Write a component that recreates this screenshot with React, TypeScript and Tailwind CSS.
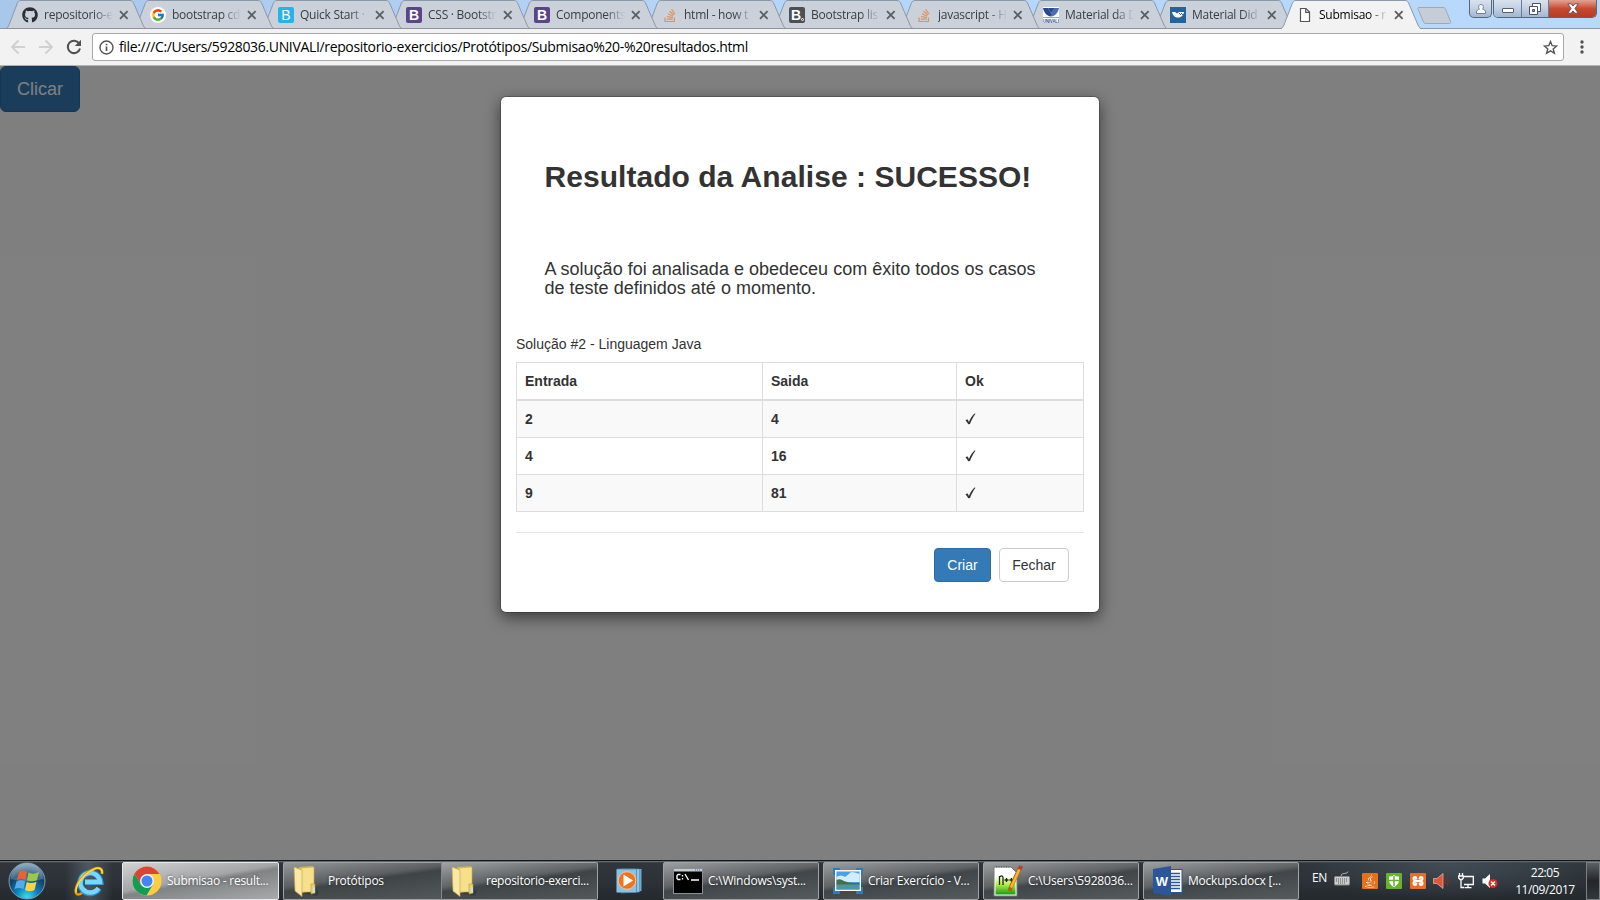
import React from 'react';
import { FaGithub, FaStackOverflow, FaJava } from 'react-icons/fa';
import { FcGoogle } from 'react-icons/fc';
import { SiXampp } from 'react-icons/si';

const uiFont = "font-['Open_Sans','Noto_Sans',sans-serif]";

function BadgeB({ tone }: { tone: 'cyan' | 'purple' | 'grey' }) {
  const bg = tone === 'cyan' ? 'bg-[#25b4e8]' : tone === 'purple' ? 'bg-[#5b4589]' : 'bg-[#4a5055]';
  const weight = tone === 'cyan' ? 'font-normal' : 'font-bold';
  return (
    <span className={`flex h-4 w-4 items-center justify-center rounded-[2px] font-['Liberation_Sans',sans-serif] text-[14px] leading-none text-white ${bg} ${weight}`}>
      B{tone === 'grey' && <span className="mt-2 -mr-px h-[3px] w-[3px] rounded-full border border-white" />}
    </span>
  );
}

function UnivaliIcon() {
  return (
    <svg width="16" height="16" viewBox="0 0 16 16">
      <rect width="16" height="16" fill="#fff" />
      <path d="M0 1H5L8 6V9.500C4 9 1 6 0 1Z" fill="#27498f" />
      <path d="M5 1H11V3L8 6Z" fill="#27498f" />
      <path d="M11 1H16C15 6 12 9 8 9.500V6Z" fill="#4c6db0" />
      <path d="M0 10H16V11H0Z" fill="#27498f" opacity=".5" />
      <text x="0" y="15.500" fontSize="4.600" fontWeight="bold" textLength="16" lengthAdjust="spacingAndGlyphs" fill="#27498f" fontFamily="Liberation Sans, sans-serif">UNIVALI</text>
    </svg>
  );
}

function MaterialIcon() {
  return (
    <svg width="16" height="16" viewBox="0 0 16 16">
      <rect width="16" height="16" fill="#24649c" />
      <path d="M2 5H5L7 6.500L9 5H14C13 9 11 10.500 8 10.500C5 10.500 3 9 2 5Z" fill="#fff" />
      <path d="M9 6h1v1h-1zM11 6h1v1h-1zM10 7h1v1h-1zM12 7h1v1h-1z" fill="#24649c" />
    </svg>
  );
}

function PageIcon() {
  return (
    <svg width="16" height="16" viewBox="0 0 16 16" fill="none" stroke="#555" strokeWidth="1.200">
      <path d="M3.500 1.500H9L12.500 5V14.500H3.500Z" fill="#fff" />
      <path d="M8.700 1.500V5.300H12.500" />
    </svg>
  );
}

type Tab = { title: string; icon: React.ReactNode; width: string; active?: boolean };

const so = <FaStackOverflow className="h-[15px] w-4 text-[#e0915a]" />;

const tabs: Tab[] = [
  { title: 'repositorio-e', icon: <FaGithub className="h-4 w-4 text-[#2b2d30]" />, width: 'w-[128px]' },
  { title: 'bootstrap cd', icon: <span className="flex h-4 w-4 items-center justify-center rounded-full bg-white"><FcGoogle className="h-[14px] w-[14px]" /></span>, width: 'w-[128px]' },
  { title: 'Quick Start ·', icon: <BadgeB tone="cyan" />, width: 'w-[128px]' },
  { title: 'CSS · Bootstr', icon: <BadgeB tone="purple" />, width: 'w-[128px]' },
  { title: 'Components', icon: <BadgeB tone="purple" />, width: 'w-[128px]' },
  { title: 'html - how t', icon: so, width: 'w-[127px]' },
  { title: 'Bootstrap lis', icon: <BadgeB tone="grey" />, width: 'w-[127px]' },
  { title: 'javascript - H', icon: so, width: 'w-[127px]' },
  { title: 'Material da D', icon: <UnivaliIcon />, width: 'w-[127px]' },
  { title: 'Material Did', icon: <MaterialIcon />, width: 'w-[127px]' },
  { title: 'Submisao - r', icon: <PageIcon />, width: 'w-[136px]', active: true },
];

function TabItem({ tab, index }: { tab: Tab; index: number }) {
  return (
    <div className={`relative flex h-[29px] shrink-0 items-center ${tab.width}`} style={{ zIndex: tab.active ? 30 : 20 - index }}>
      <svg className="absolute top-0 left-0 overflow-visible" width="140" height="29" viewBox="0 0 140 29">
        <path d="M0 29C1.500 28 2 27 3 25L11 4C12 1.500 13 .5 15 .5H124C126 .5 127 1.500 128 4L137 25C138 27 138.500 28 140 29Z" fill={tab.active ? '#f2f2f2' : '#cbd1da'} />
        <path d="M0 28.500C1.500 28 2 27 3 25L11 4C12 1.500 13 .5 15 .5H124C126 .5 127 1.500 128 4L137 25C138 27 138.500 28 140 28.500" fill="none" stroke="#8b98a8" />
        {!tab.active && <path d="M0 28.500H140" stroke="#8f9298" />}
      </svg>
      <div className="relative flex w-[126px] items-center pt-px pl-[16px]">
        <span className="flex h-4 w-4 shrink-0 items-center justify-center">{tab.icon}</span>
        <span className={`ml-[6px] w-[69px] shrink-0 text-[12px] leading-[18px] tracking-[-0.25px] whitespace-nowrap [mask-image:linear-gradient(to_right,#000_72%,transparent_100%)] ${uiFont} ${tab.active ? 'text-black' : 'text-[#3a3d42]'}`}>{tab.title}</span>
        <svg className="ml-[6px] shrink-0" width="10" height="10" viewBox="0 0 10 10" stroke="#5a5d61" strokeWidth="1.800">
          <path d="M1 1.200L8.600 8.800M8.600 1.200L1 8.800" />
        </svg>
      </div>
    </div>
  );
}

function WindowControls() {
  const glass = 'bg-linear-to-b from-[#d9e2ee] from-0% via-[#c4d2e4] via-45% to-[#a3b6d0]';
  return (
    <div className="ml-auto flex h-[18px] pr-[3px]">
      <div className={`mr-px flex w-[23px] items-center justify-center rounded-b-[5px] border border-t-0 border-[#58667a] ${glass}`}>
        <svg width="12" height="12" viewBox="0 0 12 12" fill="#fff" stroke="#6a7587" strokeWidth=".9">
          <path d="M1.500 10.500V9C1.500 7.500 3 6.500 4.500 6.200C3 4.500 3.500 1.500 6 1.500S9 4.500 7.500 6.200C9 6.500 10.500 7.500 10.500 9V10.500Z" />
        </svg>
      </div>
      <div className="flex overflow-hidden rounded-b-[5px] border border-t-0 border-[#58667a]">
        <div className={`flex w-7 items-center justify-center border-r border-[#6b7a90] pt-1 ${glass}`}>
          <span className="h-[5px] w-3 rounded-[1px] border border-[#555e70] bg-white" />
        </div>
        <div className={`flex w-[27px] items-center justify-center border-r border-[#6b7a90] ${glass}`}>
          <svg width="12" height="12" viewBox="0 0 12 12" fill="#fff" stroke="#4b5364">
            <path d="M3.500 .5H11.500V8.500H3.500Z" />
            <path d="M.5 3.500H8.500V11.500H.5Z" />
            <path d="M3.500 6.500H5.500V8.500H3.500Z" fill="#8d9fb8" />
          </svg>
        </div>
        <div className="flex w-[47px] items-center justify-center bg-linear-to-b from-[#e3a394] via-[#c74a33] via-50% to-[#b53c22]">
          <svg width="12" height="11" viewBox="0 0 12 11">
            <path d="M.8 .8H4.200L6 3L7.800 .8H11.200L8 5.500L11.200 10.200H7.800L6 8L4.200 10.200H.8L4 5.500Z" fill="#fff" stroke="#5d4a52" strokeWidth=".9" />
          </svg>
        </div>
      </div>
    </div>
  );
}

function TabStrip() {
  return (
    <div className="flex h-[29px] shrink-0 items-start bg-linear-to-r from-[#a9c7ea] via-[#b5d6fa] to-[#b9d9fb] pl-[6px] shadow-[inset_0_-1px_0_#8b98a8]">
      {tabs.map((t, i) => (
        <TabItem key={t.title} tab={t} index={i} />
      ))}
      <svg className="mt-[7px] shrink-0" width="35" height="18" viewBox="0 0 35 18">
        <path d="M2 .5H26C27.500 .5 28 1 28.500 2L33.500 14.500C34 16 33.500 16.500 32.500 16.500H9C7.500 16.500 7 16 6.500 15L1 2C.7 1 1 .5 2 .5Z" fill="#c6cdd6" stroke="#9aaabd" />
      </svg>
      <WindowControls />
    </div>
  );
}

function Toolbar() {
  return (
    <div className="relative z-40 flex h-[37px] shrink-0 items-center border-b border-[#b4b4b4] bg-[#f2f2f2]">
      <svg className="ml-[10px]" width="16" height="16" viewBox="0 0 16 16" fill="none" stroke="#d0d0d0" strokeWidth="1.900">
        <path d="M15 8H2.500M8.500 1.500L2 8L8.500 14.500" />
      </svg>
      <svg className="ml-3" width="16" height="16" viewBox="0 0 16 16" fill="none" stroke="#d0d0d0" strokeWidth="1.900">
        <path d="M1 8H13.500M7.500 1.500L14 8L7.500 14.500" />
      </svg>
      <svg className="ml-3" width="16" height="16" viewBox="0 0 16 16" fill="none" stroke="#505050" strokeWidth="2">
        <path d="M13.200 4.500A6.200 6.200 0 1 0 14 9.500" />
        <path d="M15 .8V7H8.800Z" fill="#505050" stroke="none" />
      </svg>
      <div className="ml-[10px] flex h-7 w-[1472px] items-center rounded-[3px] border border-[#a9a9a9] bg-white">
        <svg className="ml-[6px]" width="15" height="15" viewBox="0 0 15 15" fill="none" stroke="#555" strokeWidth="1.400">
          <circle cx="7.500" cy="7.500" r="6.500" />
          <path d="M7.500 6.500V11M7.500 3.700V5.300" strokeWidth="1.700" />
        </svg>
        <span className={`ml-[5px] text-[14px] leading-5 tracking-[-0.342px] whitespace-nowrap text-black ${uiFont}`}>file:///C:/Users/5928036.UNIVALI/repositorio-exercicios/Protótipos/Submisao%20-%20resultados.html</span>
        <svg className="mr-[5px] ml-auto" width="15" height="15" viewBox="0 0 15 15" fill="none" stroke="#555" strokeWidth="1.400">
          <path d="M7.500 1.500L9.200 5.700L13.700 6L10.200 8.900L11.400 13.300L7.500 10.900L3.600 13.300L4.800 8.900L1.300 6L5.800 5.700Z" />
        </svg>
      </div>
      <svg className="ml-[16px]" width="4" height="14" viewBox="0 0 4 14" fill="#505050">
        <circle cx="2" cy="2" r="1.700" />
        <circle cx="2" cy="7" r="1.700" />
        <circle cx="2" cy="12" r="1.700" />
      </svg>
    </div>
  );
}

const rows = [
  ['2', '4'],
  ['4', '16'],
  ['9', '81'],
];

function ResultModal() {
  return (
    <div className="mt-[30px] flex h-[517px] w-[600px] flex-col rounded-[6px] border border-black/20 bg-white bg-clip-padding px-[15px] text-[14px] leading-5 text-[#333] shadow-[0_5px_15px_rgba(0,0,0,0.5)]">
      <h2 className="mt-[63px] ml-[28.5px] text-[30px] leading-[33px] font-bold tracking-[0.04px] whitespace-nowrap">Resultado da Analise : SUCESSO!</h2>
      <h4 className="mt-[67px] ml-[28.5px] text-[18px] leading-[19px] tracking-[0.012px] whitespace-nowrap">
        A solução foi analisada e obedeceu com êxito todos os casos
        <br />
        de teste definidos até o momento.
      </h4>
      <p className="mt-9 mb-[8px]">Solução #2 - Linguagem Java</p>
      <table className="w-[568px] table-fixed border-collapse border border-[#ddd] text-left">
        <colgroup>
          <col className="w-[246px]" />
          <col className="w-[194px]" />
          <col className="w-[127px]" />
        </colgroup>
        <thead>
          <tr className="h-[37px]">
            {['Entrada', 'Saida', 'Ok'].map((h) => (
              <th key={h} className="border border-b-2 border-[#ddd] px-2 pt-px font-bold">{h}</th>
            ))}
          </tr>
        </thead>
        <tbody>
          {rows.map(([a, b]) => (
            <tr key={a} className="h-[37px] first:h-[38px] odd:bg-[#f9f9f9]">
              <td className="border border-[#ddd] px-2 font-bold">{a}</td>
              <td className="border border-[#ddd] px-2 font-bold">{b}</td>
              <td className="border border-[#ddd] px-2">
                <svg width="11" height="12" viewBox="0 0 11 12" fill="#333">
                  <path d="M0.500 7.500L2.300 6.300C3.100 7 3.500 8 3.900 9C5.300 5.500 7.200 2.500 9.500 0.500L10.500 .8C8.300 3.700 6.300 7.500 5 11L3.200 11.300C2.600 9.700 1.700 8.500 0.500 7.500Z" />
                </svg>
              </td>
            </tr>
          ))}
        </tbody>
      </table>
      <div className="mt-5 flex justify-end gap-2 border-t border-[#e5e5e5] px-[15px] pt-[15px]">
        <button className="h-[34px] w-[57px] rounded-[4px] border border-[#2e6da4] bg-[#337ab7] text-white">Criar</button>
        <button className="h-[34px] w-[70px] rounded-[4px] border border-[#ccc] bg-white">Fechar</button>
      </div>
    </div>
  );
}

function StartOrb() {
  return (
    <svg width="38" height="38" viewBox="0 0 38 38">
      <defs>
        <radialGradient id="orb" cx=".5" cy=".95" r=".9">
          <stop offset="0" stopColor="#2fe0ff" />
          <stop offset=".35" stopColor="#127fb8" />
          <stop offset=".7" stopColor="#123f63" />
          <stop offset="1" stopColor="#6d93ad" />
        </radialGradient>
      </defs>
      <circle cx="19" cy="19" r="18" fill="url(#orb)" stroke="#7d99a9" />
      <path d="M3 17A16 16 0 0 1 35 17Q19 22 3 17Z" fill="#fff" opacity=".2" />
      <path d="M11 10Q15 7 19 10L17.500 18Q13.500 15.500 9 18Z" fill="#ee6033" />
      <path d="M20.500 10.500Q25 13 31 10L29 18Q24 20.500 19 18.200Z" fill="#9bc94a" />
      <path d="M8.500 19.500Q13 17 17.200 19.500L15.500 27Q11 25 6.500 27Z" fill="#53aee8" />
      <path d="M18.700 20Q23 22 28.500 19.700L26.500 28Q21.500 30.500 17 28Z" fill="#fbd04b" />
    </svg>
  );
}

function IeIcon() {
  return (
    <svg width="32" height="32" viewBox="0 0 32 32" fill="none">
      <path d="M26 23.500A10.200 10.200 0 1 1 27.500 17H12" stroke="#2a8fd0" strokeWidth="6" />
      <path d="M25.500 23A9.800 9.800 0 1 1 27 17H12" stroke="#79d8fa" strokeWidth="4.400" />
      <path d="M29 9C30 4 26.500 1.500 21 4C11 8 1 20 3 28C3.500 30 6 30 9 28" stroke="#dfa000" strokeWidth="2.600" />
      <path d="M29 8.500C30 4 26 1.500 20.500 4.300C11 9 2 20 3 27.500" stroke="#ffe04a" strokeWidth="1.400" />
    </svg>
  );
}

function ChromeIcon() {
  return (
    <svg width="30" height="30" viewBox="0 0 30 30">
      <circle cx="15" cy="15" r="14.500" fill="#ffcd42" />
      <path d="M2.500 7.700A14.500 14.500 0 0 0 14.500 29.500L21 18.500L15 15L9 18.500Z" fill="#0f9d58" />
      <path d="M2.500 7.700A14.500 14.500 0 0 1 27.600 8H15L9 11.500V18.500Z" fill="#db4437" />
      <circle cx="15" cy="15" r="7" fill="#f1f1f1" />
      <circle cx="15" cy="15" r="5.500" fill="#4285f4" />
    </svg>
  );
}

function FolderIcon() {
  return (
    <svg width="30" height="32" viewBox="0 0 30 32">
      <path d="M8 28L24 31L26 27L22 22Z" fill="#222" opacity=".3" />
      <path d="M6 2L20 1V26L8 28Z" fill="#d9b652" />
      <path d="M8 3L21 2V27H8Z" fill="#f6e08c" stroke="#caa640" strokeWidth=".6" />
      <path d="M18 19H22V28L18 29Z" fill="#ead06f" stroke="#c09b37" strokeWidth=".6" />
      <path d="M1 2L9 5V31.500L2 26Z" fill="#f9e9a4" stroke="#c9a642" strokeWidth=".7" />
      <rect x="20" y="22" width="2" height="6" rx=".8" fill="#bfe0f5" />
    </svg>
  );
}

function PlayerIcon() {
  return (
    <svg width="26" height="26" viewBox="0 0 26 26">
      <path d="M7 1H25.500V23L7 25Z" fill="#6ea9cf" />
      <path d="M5 1H23.500V24L5 25Z" fill="#93c6e4" stroke="#528bb1" strokeWidth=".6" />
      <rect x=".5" y="1" width="20" height="23.500" rx="1" fill="#8dc1e2" stroke="#4b86ad" strokeWidth=".8" />
      <circle cx="11" cy="12.500" r="8.800" fill="#ee7420" stroke="#f9c79a" />
      <path d="M7.500 6.500L17 12.500L7.500 18.500Z" fill="#fff" />
    </svg>
  );
}

function CmdIcon() {
  return (
    <svg width="30" height="26" viewBox="0 0 30 26">
      <rect x=".5" y=".5" width="29" height="25" fill="#000" stroke="#8a8f95" />
      <rect x="1" y="1" width="28" height="2.500" fill="#c5ccd4" />
      <path d="M22 2H28" stroke="#3a6fc0" strokeDasharray="1 1" />
      <path d="M7.500 6.500H5L4 7.500V10.500L5 11.500H7.500M9.500 7V8.500M9.500 10V11.500M12 6L15.500 12M18 12H26" fill="none" stroke="#fff" strokeWidth="1.300" />
    </svg>
  );
}

function PhotoIcon() {
  return (
    <svg width="30" height="26" viewBox="0 0 30 26">
      <path d="M0 0H7V7H0ZM23 0H30V7H23ZM0 19H7V26H0ZM23 19H30V26H23Z" fill="#2e7cc0" />
      <rect x="2" y="2" width="26" height="21" fill="#eff7fb" />
      <rect x="3.500" y="3.500" width="23" height="18" fill="#4f9fe4" />
      <path d="M3.500 9Q8 6 12 9Q15 7 18 4Q22 4 26.500 6V14H3.500Z" fill="#d3edfb" />
      <path d="M3.500 12Q7 10 11 13Q18 16 26.500 14.500V17H3.500Z" fill="#456f54" />
      <path d="M3.500 16.500H26.500V21.500H3.500Z" fill="#4f97a0" />
    </svg>
  );
}

function NotepadIcon() {
  return (
    <svg width="30" height="32" viewBox="0 0 30 32">
      <defs>
        <linearGradient id="np" x1="0" y1="0" x2="0" y2="1">
          <stop offset=".3" stopColor="#fff" />
          <stop offset=".6" stopColor="#b8f04a" />
          <stop offset="1" stopColor="#169b14" />
        </linearGradient>
      </defs>
      <path d="M1 2H18L24 8V31H1Z" fill="#fff" stroke="#777" />
      <path d="M2.500 3.500H17L22.500 9V29.500H2.500Z" fill="url(#np)" />
      <path d="M3 2H18" stroke="#555" strokeDasharray="1 1.500" />
      <path d="M6.500 11V20M6.500 12Q10 9.500 10 13V20M11.500 15H15.500M13.500 13V17M16.500 15H20.500M18.500 13V17" fill="none" stroke="#1b2613" strokeWidth="1.300" />
      <path d="M27 2.500L18 22L16.500 26" stroke="#a96812" strokeWidth="4" fill="none" />
      <path d="M27 3L18 22.500" stroke="#ffb32e" strokeWidth="2.600" />
      <path d="M28.200 1L26.500 4.500" stroke="#b53d3d" strokeWidth="4" />
    </svg>
  );
}

function WordIcon() {
  return (
    <svg width="30" height="30" viewBox="0 0 30 30">
      <rect x="16" y="3.500" width="13" height="23" fill="#fff" stroke="#2b579a" />
      <path d="M18 7.500H27M18 10.500H27M18 13.500H27M18 16.500H27M18 19.500H27M18 22.500H27" stroke="#2b579a" strokeWidth="1.300" />
      <path d="M0 3L18 0V30L0 27Z" fill="#2b579a" />
      <text x="8.800" y="19.800" fontSize="13" fontWeight="bold" fill="#fff" textAnchor="middle" fontFamily="Liberation Sans, sans-serif">W</text>
    </svg>
  );
}

function TaskButton({ icon, label, width, variant = 'normal' }: { icon: React.ReactNode; label: string; width: string; variant?: 'normal' | 'active' | 'groupLeft' | 'groupRight' }) {
  const look =
    variant === 'active'
      ? 'rounded-[2px] border border-[#e8e8e8] bg-[linear-gradient(170deg,#d2d3d3_0%,#a3a5a6_45%,#808485_52%,#a8aaab_100%)]'
      : variant === 'groupLeft'
        ? 'rounded-l-[2px] border border-r-0 border-[#a0a3a6] bg-[linear-gradient(172deg,#96999b_0%,#5b5f62_42%,#3f4447_50%,#53585b_100%)]'
        : variant === 'groupRight'
          ? 'rounded-r-[2px] border border-[#a0a3a6] border-l-[#85898c] bg-[linear-gradient(172deg,#a0a3a5_0%,#606467_42%,#3f4447_50%,#53585b_100%)]'
          : 'rounded-[2px] border border-[#a0a3a6] bg-[linear-gradient(172deg,#9c9fa1_0%,#5f6366_42%,#41464a_50%,#565b5e_100%)]';
  return (
    <div className={`flex h-[38px] shrink-0 items-center pl-[9px] ${width} ${look}`}>
      <span className="flex w-[30px] shrink-0 items-center justify-center">{icon}</span>
      <span className={`ml-[5px] text-[12px] leading-4 whitespace-nowrap text-white [text-shadow:0_0_3px_#0008] ${uiFont} ${variant === 'normal' ? 'tracking-[-0.22px]' : 'tracking-[-0.26px]'}`}>{label}</span>
    </div>
  );
}

function Tray() {
  return (
    <div className={`flex h-full flex-1 items-center bg-[radial-gradient(ellipse_at_50%_10%,#51606e88,transparent_70%)] pl-[13px] text-white ${uiFont}`}>
      <span className="mb-[5px] w-[22px] text-[12px] tracking-[-0.3px]">EN</span>
      <svg className="mb-1 shrink-0" width="16" height="15" viewBox="0 0 16 15">
        <path d="M7 5Q7 2.500 10 2.500Q14 2.500 14 .5" fill="none" stroke="#aaa" />
        <rect x=".5" y="5.500" width="15" height="8.500" rx="1" fill="#ccc" stroke="#888" />
        <path d="M2 8H14M2 10H14M4 12H12" stroke="#555" strokeDasharray="1 1" />
      </svg>
      <span className="ml-3 flex h-4 w-4 shrink-0 items-center justify-center rounded-[1px] bg-[#e5701d]"><FaJava className="h-[14px] w-[14px]" /></span>
      <svg className="ml-2 shrink-0" width="16" height="16" viewBox="0 0 16 16">
        <rect width="16" height="16" rx="1" fill="#67b32e" />
        <path d="M3 3.500Q6 4 8 2Q10 4 13 3.500V8Q12 12 8 14Q4 12 3 8Z" fill="#fff" />
        <path d="M8 3V13M3 7.500H13" stroke="#67b32e" strokeWidth="1.500" />
      </svg>
      <span className="ml-2 flex h-4 w-4 shrink-0 items-center justify-center rounded-[1px] bg-[#ef6c23]">
        <svg width="14" height="14" viewBox="0 0 14 14" fill="none" stroke="#fff" strokeWidth="2.200">
          <path d="M4 7H10M5.200 5.500V4.200Q5.200 3 4 3T2.500 4.300Q2.500 6 4 7Q2.500 8 2.500 9.700Q2.800 11 4 11T5.200 9.800V8.500M8.800 5.500V4.200Q8.800 3 10 3T11.500 4.300Q11.500 6 10 7Q11.500 8 11.500 9.700Q11.200 11 10 11T8.800 9.800V8.500" />
        </svg>
      </span>
      <svg className="ml-[7px] shrink-0" width="16" height="16" viewBox="0 0 16 16">
        <path d="M.5 5.500H4L10 .5V15.500L4 10.500H.5Z" fill="#e0563a" stroke="#f5b9a6" strokeWidth=".7" />
        <path d="M12 5Q13.500 8 12 11M14 3.500Q16.500 8 14 12.500" fill="none" stroke="#8a2e20" />
      </svg>
      <svg className="ml-[9px] shrink-0" width="16" height="16" viewBox="0 0 16 16" fill="none" stroke="#fff" strokeWidth="1.300">
        <path d="M6 3.500H15.300V11.500H6M10 12V14.500M6.500 14.700H13.500" />
        <path d="M1.500 0V3M4.500 0V3M.7 3H5.300V5L4 6.500H2L.7 5ZM3 6.500V14.500H6" />
      </svg>
      <svg className="ml-2 shrink-0" width="16" height="16" viewBox="0 0 16 16">
        <path d="M.5 5.500H3L8 1V15L3 10.500H.5Z" fill="#fff" />
        <circle cx="11" cy="10.500" r="4.500" fill="#dc2d25" />
        <path d="M9 8.500L13 12.500M13 8.500L9 12.500" stroke="#fff" strokeWidth="1.500" />
      </svg>
      <div className="ml-[13px] flex w-[68px] flex-col items-center text-[12px] leading-[17px] tracking-[-0.4px]">
        <span>22:05</span>
        <span>11/09/2017</span>
      </div>
      <div className="ml-auto h-[38px] w-[14px] border border-[#7b8085] bg-linear-to-b from-[#5c6166] via-[#22262a] to-[#33383d]" />
    </div>
  );
}

function Taskbar() {
  return (
    <div className="flex h-10 shrink-0 items-center border-t border-[#15181b] bg-[linear-gradient(to_bottom,#6f767c_0px,#30363b_2px,#2c3237_20px,#24292e_100%)]">
      <div className="flex w-[122px] shrink-0 items-center pl-2">
        <StartOrb />
        <span className="ml-[19px] flex w-[48px] justify-center bg-[linear-gradient(to_right,transparent,#7d8c9c66,transparent)] py-[3px]"><IeIcon /></span>
      </div>
      <TaskButton variant="active" width="w-[157px]" icon={<ChromeIcon />} label="Submisao - result..." />
      <div className="ml-1 flex">
        <TaskButton variant="groupLeft" width="w-[158px]" icon={<FolderIcon />} label="Protótipos" />
        <TaskButton variant="groupRight" width="w-[157px]" icon={<FolderIcon />} label="repositorio-exerci..." />
      </div>
      <div className="flex w-[65px] shrink-0 justify-center pr-1"><PlayerIcon /></div>
      <div className="flex gap-1">
        <TaskButton width="w-[156px]" icon={<CmdIcon />} label="C:\Windows\syst..." />
        <TaskButton width="w-[156px]" icon={<PhotoIcon />} label="Criar Exercício - V..." />
        <TaskButton width="w-[156px]" icon={<NotepadIcon />} label="C:\Users\5928036..." />
        <TaskButton width="w-[156px]" icon={<WordIcon />} label="Mockups.docx [..." />
      </div>
      <Tray />
    </div>
  );
}

export default function App() {
  return (
    <div className="flex h-[900px] w-[1600px] flex-col overflow-hidden bg-white font-['Liberation_Sans',Arial,sans-serif]">
      <TabStrip />
      <Toolbar />
      <main className="relative flex-1">
        <button className="h-[46px] w-20 rounded-[6px] border border-[#2e6da4] bg-[#337ab7] text-[18px] leading-6 text-white">Clicar</button>
        <div className="absolute inset-0 flex items-start justify-center bg-black/50">
          <ResultModal />
        </div>
      </main>
      <Taskbar />
    </div>
  );
}
